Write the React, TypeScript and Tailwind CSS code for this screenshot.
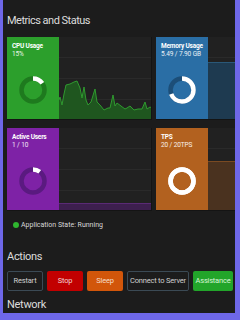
import React from "react";

type ChartKind = "line" | "level";

interface MetricCardProps {
  label: string;
  value: string;
  bg: string;
  track: string;
  percent: number;
  chart: ChartKind;
  fillClass?: string;
  fillTop?: number;
}

// cpu history as [x, height from bottom] inside the 93x83 chart
const cpuSeries: [number, number][] = [
  [0, 20], [1, 23], [3, 15], [5, 26], [7, 35], [11, 36], [15, 38], [18, 39], [21, 32],
  [23, 22], [25, 33], [27, 20], [29, 15], [32, 18], [36, 31], [38, 18], [41, 15], [45, 10],
  [49, 12], [51, 12], [54, 25], [56, 14], [58, 17], [62, 14], [66, 11], [68, 12], [71, 14],
  [75, 10], [79, 11], [83, 11], [86, 18], [88, 11], [91, 13], [93, 12],
];

const CpuChart = () => {
  const w = 93;
  const h = 83;
  const pts = cpuSeries.map(([x, v]) => `${x},${h - v}`).join(" ");
  return (
    <svg width={w} height={h} viewBox={`0 0 ${w} ${h}`} className="absolute inset-0">
      <polygon points={`0,${h} ${pts} ${w},${h}`} fill="#1f561f" />
      <polyline points={pts} fill="none" stroke="#2f9a2f" strokeWidth={1} />
    </svg>
  );
};

const Donut: React.FC<{ track: string; percent: number }> = ({ track, percent }) => {
  const r = 11.5;
  const c = 2 * Math.PI * r;
  return (
    <svg width={28} height={28} viewBox="0 0 28 28" className="mx-auto mt-[18px]">
      <circle cx={14} cy={14} r={r} fill="none" stroke={track} strokeWidth={4.5} />
      <circle
        cx={14}
        cy={14}
        r={r}
        fill="none"
        stroke="#ffffff"
        strokeWidth={4.5}
        strokeDasharray={`${(c * percent) / 100} ${c}`}
        transform="rotate(-90 14 14)"
      />
    </svg>
  );
};

const MetricCard: React.FC<MetricCardProps> = ({
  label,
  value,
  bg,
  track,
  percent,
  chart,
  fillClass,
  fillTop,
}) => (
  <div className="flex h-[83px] w-[145px] overflow-hidden border-r border-b border-[#141414] bg-[#212121]">
    <div className={`w-[52px] shrink-0 px-[5px] pt-[5px] ${bg}`}>
      <div className="whitespace-nowrap text-[6.5px] leading-[8px] font-bold tracking-[-0.2px] text-white">
        {label}
      </div>
      <div className="whitespace-nowrap text-[6.5px] leading-[8px] tracking-[-0.1px] text-white/90">
        {value}
      </div>
      <Donut track={track} percent={percent} />
    </div>
    <div className="relative flex-1">
      <div className="absolute inset-x-0 top-[20px] border-t border-[#2a2a2a]" />
      <div className="absolute inset-x-0 top-[41px] border-t border-[#2a2a2a]" />
      <div className="absolute inset-x-0 top-[62px] border-t border-[#2a2a2a]" />
      {chart === "line" ? (
        <CpuChart />
      ) : (
        <div
          className={`absolute inset-x-0 bottom-0 ${fillClass}`}
          style={{ top: fillTop }}
        />
      )}
    </div>
  </div>
);

export default function App() {
  return (
    <div className="h-[320px] w-[240px] overflow-hidden bg-[#6e67e8] font-['Roboto',sans-serif]">
      <div className="ml-[3px] h-[313px] w-[232px] overflow-hidden bg-[#1c1c1c] pl-[4px]">
        <h2 className="pt-[13px] text-[11px] leading-[15px] tracking-[-0.5px] text-[#dcdcdc]">
          Metrics and Status
        </h2>

        <div className="mt-[9px] grid w-[294px] grid-cols-[145px_145px] gap-x-[4px] gap-y-[8px]">
          <MetricCard
            label="CPU Usage"
            value="15%"
            bg="bg-[#2c9f2c]"
            track="#1e7a1e"
            percent={15}
            chart="line"
          />
          <MetricCard
            label="Memory Usage"
            value="5.49 / 7.90 GB"
            bg="bg-[#2a6ea5]"
            track="#1c4e78"
            percent={69}
            chart="level"
            fillClass="bg-[#1e3a50] border-t border-[#2a5878]"
            fillTop={25}
          />
          <MetricCard
            label="Active Users"
            value="1 / 10"
            bg="bg-[#7e22a6]"
            track="#5a1a80"
            percent={10}
            chart="level"
            fillClass="bg-[#3d1f4e] border-t border-[#5a2a75]"
            fillTop={75}
          />
          <MetricCard
            label="TPS"
            value="20 / 20TPS"
            bg="bg-[#b2611f]"
            track="#ffffff"
            percent={100}
            chart="level"
            fillClass="bg-[#4a321f] border-t border-[#7a4a22]"
            fillTop={33}
          />
        </div>

        <div className="mt-[10px] flex items-center gap-[2px] pl-[6px] text-[7px] leading-[8px] text-[#d8d8d8]">
          <span className="h-[6px] w-[6px] rounded-full bg-[#2fb52f]" />
          <span>Application State: Running</span>
        </div>

        <h2 className="mt-[20px] text-[11px] leading-[15px] tracking-[-0.3px] text-[#dcdcdc]">
          Actions
        </h2>

        <div className="mt-[7px] flex gap-[4px] text-[7.5px] tracking-[-0.2px] whitespace-nowrap">
          <button className="h-[20px] w-[36px] rounded-[2px] border border-[#3b4a55] bg-[#1c1c1c] text-[#d0d0d0]">
            Restart
          </button>
          <button className="h-[20px] w-[36px] rounded-[2px] bg-[#c20000] text-[#f0d0d0]">
            Stop
          </button>
          <button className="h-[20px] w-[36px] rounded-[2px] bg-[#d2560a] text-[#f5dcc8]">
            Sleep
          </button>
          <button className="h-[20px] w-[62px] shrink-0 rounded-[2px] border border-[#3b4a55] bg-[#1c1c1c] px-0 text-[#d0d0d0]">
            Connect to Server
          </button>
          <button className="h-[20px] w-[40px] shrink-0 rounded-[2px] bg-[#22a52a] px-0 text-[#d8f5d8]">
            Assistance
          </button>
        </div>

        <h2 className="mt-[8px] text-[11px] leading-[12px] tracking-[-0.3px] text-[#dcdcdc]">
          Network
        </h2>
      </div>
    </div>
  );
}
